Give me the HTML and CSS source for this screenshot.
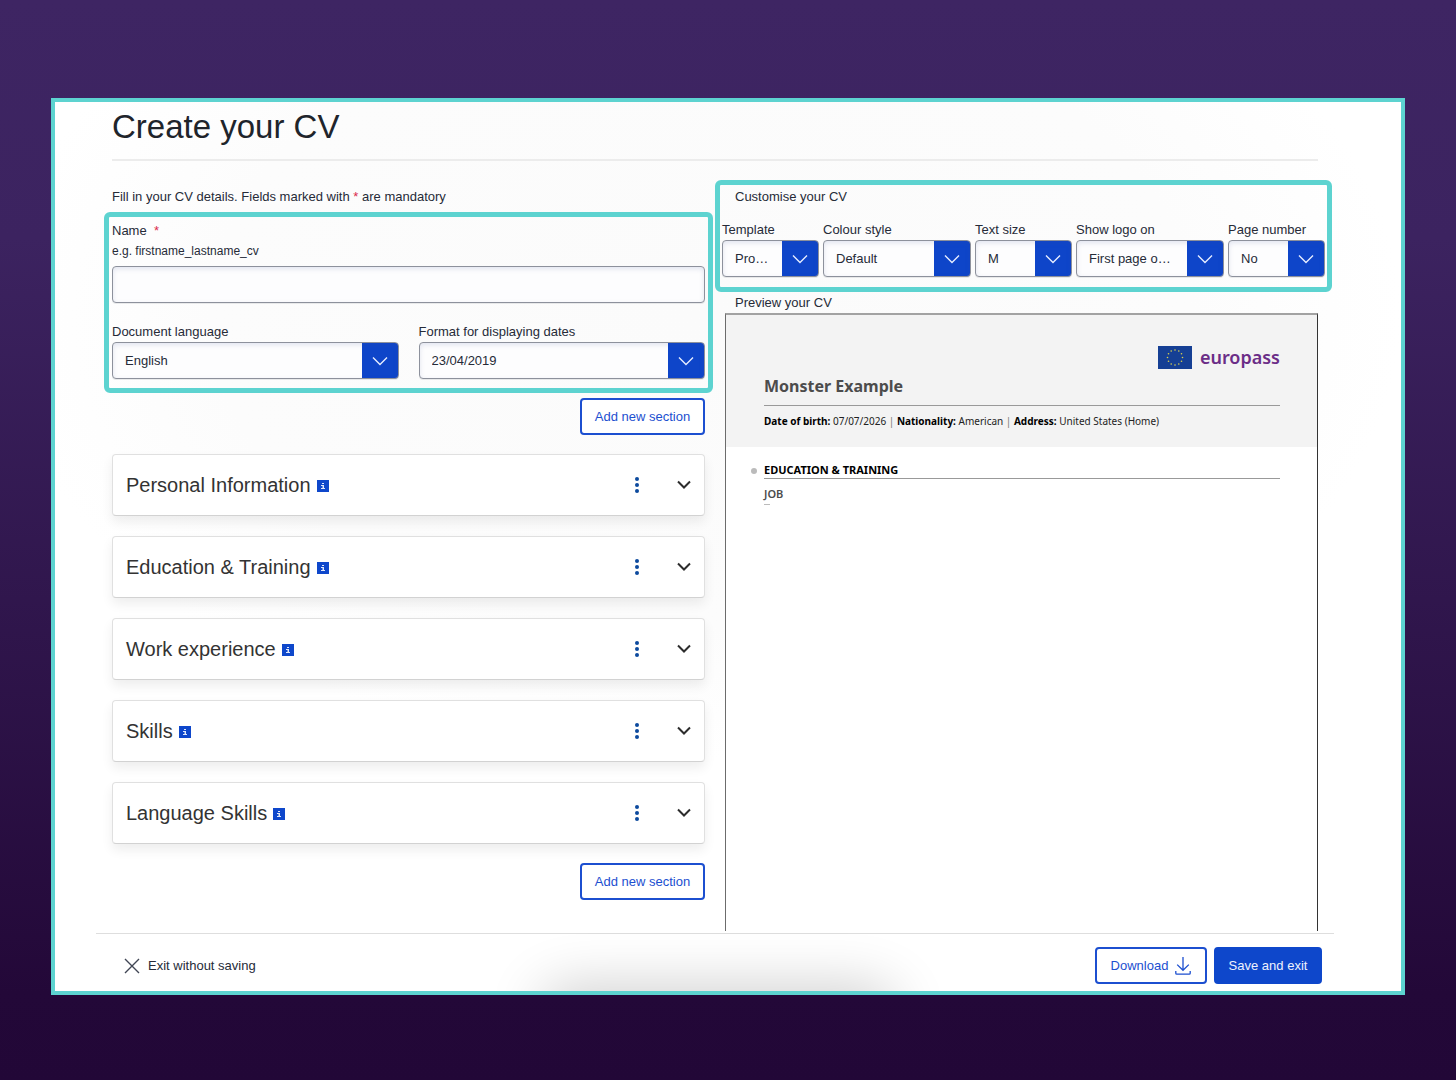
FILE: index.html
```html
<!DOCTYPE html>
<html lang="en">
<head>
<meta charset="utf-8">
<meta name="viewport" content="width=device-width, initial-scale=1">
<title>Create your CV</title>
<link rel="stylesheet" href="styles.css">
</head>
<body>
<svg class="sprite" aria-hidden="true">
  <symbol id="kebab" viewBox="0 0 6 18"><circle cx="3" cy="3" r="2"/><circle cx="3" cy="9" r="2"/><circle cx="3" cy="15" r="2"/></symbol>
  <symbol id="chevron" viewBox="0 0 14 10"><path d="M1 1.5 7 7.5 13 1.5" fill="none" stroke="currentColor" stroke-width="2"/></symbol>
  <symbol id="info" viewBox="0 0 12 12"><rect width="12" height="12" fill="#0e47cb"/><path d="M5 3h2v1H5zM4 5h3v3h1v1H4V8h1.500V6H4z" fill="#dfe7fa"/></symbol>
</svg>
<div class="frame">
  <header class="page-head"><h1>Create your CV</h1></header>
  <main class="columns">
    <form class="editor">
      <p class="intro">Fill in your CV details. Fields marked with <span class="req">*</span> are mandatory</p>
      <div class="highlight details">
        <label for="cv-name">Name &nbsp;<span class="req">*</span></label>
        <p class="hint" id="name-hint">e.g. firstname_lastname_cv</p>
        <input class="text-input" id="cv-name" type="text" aria-describedby="name-hint">
        <div class="pair">
          <div class="field"><label for="lang">Document language</label><select id="lang"><option>English</option></select></div>
          <div class="field"><label for="dates">Format for displaying dates</label><select id="dates"><option>23/04/2019</option></select></div>
        </div>
      </div>
      <button class="btn add" type="button">Add new section</button>
      <div class="cards">
        <section class="card"><h2>Personal Information</h2><button class="icon info" type="button" aria-label="Info"><svg><use href="#info"/></svg></button><button class="icon kebab" type="button" aria-label="Options"><svg><use href="#kebab"/></svg></button><button class="icon chevron" type="button" aria-label="Expand"><svg><use href="#chevron"/></svg></button></section>
        <section class="card"><h2>Education &amp; Training</h2><button class="icon info" type="button" aria-label="Info"><svg><use href="#info"/></svg></button><button class="icon kebab" type="button" aria-label="Options"><svg><use href="#kebab"/></svg></button><button class="icon chevron" type="button" aria-label="Expand"><svg><use href="#chevron"/></svg></button></section>
        <section class="card"><h2>Work experience</h2><button class="icon info" type="button" aria-label="Info"><svg><use href="#info"/></svg></button><button class="icon kebab" type="button" aria-label="Options"><svg><use href="#kebab"/></svg></button><button class="icon chevron" type="button" aria-label="Expand"><svg><use href="#chevron"/></svg></button></section>
        <section class="card"><h2>Skills</h2><button class="icon info" type="button" aria-label="Info"><svg><use href="#info"/></svg></button><button class="icon kebab" type="button" aria-label="Options"><svg><use href="#kebab"/></svg></button><button class="icon chevron" type="button" aria-label="Expand"><svg><use href="#chevron"/></svg></button></section>
        <section class="card"><h2>Language Skills</h2><button class="icon info" type="button" aria-label="Info"><svg><use href="#info"/></svg></button><button class="icon kebab" type="button" aria-label="Options"><svg><use href="#kebab"/></svg></button><button class="icon chevron" type="button" aria-label="Expand"><svg><use href="#chevron"/></svg></button></section>
      </div>
      <button class="btn add" type="button">Add new section</button>
    </form>
    <div class="result">
      <form class="highlight customise">
        <p class="caption">Customise your CV</p>
        <div class="options">
          <div class="field"><label for="template">Template</label><select id="template"><option>Pro…</option></select></div>
          <div class="field"><label for="colour">Colour style</label><select id="colour"><option>Default</option></select></div>
          <div class="field"><label for="size">Text size</label><select id="size"><option>M</option></select></div>
          <div class="field"><label for="logo">Show logo on</label><select id="logo"><option>First page o…</option></select></div>
          <div class="field"><label for="number">Page number</label><select id="number"><option>No</option></select></div>
        </div>
      </form>
      <p class="caption">Preview your CV</p>
      <article class="preview">
        <header class="cv-head">
          <div class="brand">
            <svg class="flag" viewBox="0 0 34 23" aria-hidden="true"><rect width="34" height="23" fill="#153f94"/>
              <g fill="#d9d04e"><circle cx="17" cy="4" r=".8"/><circle cx="20.8" cy="5" r=".8"/><circle cx="23.5" cy="7.7" r=".8"/><circle cx="24.5" cy="11.5" r=".8"/><circle cx="23.5" cy="15.3" r=".8"/><circle cx="20.8" cy="18" r=".8"/><circle cx="17" cy="19" r=".8"/><circle cx="13.2" cy="18" r=".8"/><circle cx="10.5" cy="15.3" r=".8"/><circle cx="9.5" cy="11.5" r=".8"/><circle cx="10.5" cy="7.7" r=".8"/><circle cx="13.2" cy="5" r=".8"/></g></svg>
            <span>europass</span>
          </div>
          <h2>Monster Example</h2>
          <p><b>Date of birth:</b> 07/07/2026 <i>|</i> <b>Nationality:</b> American <i>|</i> <b>Address:</b> United States (Home)</p>
        </header>
        <section class="cv-section">
          <h3>EDUCATION &amp; TRAINING</h3>
          <h4>JOB</h4>
        </section>
      </article>
    </div>
  </main>
  <footer class="actions">
    <button class="exit" type="button"><svg viewBox="0 0 16 16" aria-hidden="true"><path d="M1 1 15 15M15 1 1 15" fill="none" stroke="#404654" stroke-width="1.4"/></svg>Exit without saving</button>
    <button class="btn download" type="button">Download<svg viewBox="0 0 16 18" aria-hidden="true"><path d="M8 0V13M2.200 7.600 8 13.300 13.800 7.600M.8 14v2.200q0 1 1 1H14.200q1 0 1-1V14" fill="none" stroke="currentColor" stroke-width="1.300"/></svg></button>
    <button class="btn save" type="button">Save and exit</button>
  </footer>
</div>
</body>
</html>
```
FILE: styles.css
```css
* { box-sizing: border-box; }
body {
  margin: 0;
  min-height: 100vh;
  padding: 98px 51px 85px;
  background: linear-gradient(#3e2563 0%, #3c2360 22%, #230838 92%, #220737 100%);
  font: 13px/20px "Liberation Sans", Arial, sans-serif;
  color: #262b38;
}
h1, h2, h3, h4, p { margin: 0; font-weight: 400; }
button, input, select { font: inherit; color: inherit; margin: 0; }
button { cursor: pointer; }
.sprite { display: none; }

.frame {
  position: relative;
  overflow: hidden;
  border: 4px solid #5dd3d0;
  background: radial-gradient(ellipse 52% 50% at 48% 24%, #fbfbfb 0%, #fcfcfc 70%, #fff 100%) #fff;
}
/* soft shade rising from the lower edge */
.frame::after {
  content: "";
  position: absolute;
  left: 50%;
  top: 100%;
  width: 340px;
  height: 40px;
  margin-left: -180px;
  border-radius: 20px;
  box-shadow: 0 4px 56px 8px rgba(0, 0, 0, .2);
  pointer-events: none;
}

.page-head { margin: 0 83px 0 57px; padding-bottom: 7px; border-bottom: 2px solid #ececec; }
h1 { font-size: 33px; line-height: 50px; color: #20242b; }

.columns {
  display: grid;
  grid-template-columns: 609fr 617fr;
  gap: 2px;
  margin: 19px 69px 2px 49px;
}
.editor { display: flex; flex-direction: column; padding-bottom: 31px; }
.intro { padding: 7px 8px 5px; }
.req { color: #da2a4c; }
.highlight { border: 5px solid #5dd3d0; border-radius: 6px; }
.details { padding: 4px 3px 9px; }
.details label, .field label { display: block; }
.hint { font-size: 12px; line-height: 20px; }

.text-input, select {
  display: block;
  width: 100%;
  height: 37px;
  border: 1px solid #8d919c;
  border-radius: 4px;
  background-color: #fdfdfe;
  box-shadow: inset 0 2px 5px rgba(60, 80, 150, .14), 0 1px 0 rgba(60, 65, 80, .1);
}
.text-input { margin-top: 5px; padding: 0 12px; }
select {
  appearance: none;
  padding: 0 40px 0 12px;
  text-overflow: ellipsis;
  background-image:
    url("data:image/svg+xml,%3Csvg xmlns='http://www.w3.org/2000/svg' width='36' height='37'%3E%3Crect width='36' height='37' fill='%230e45c9'/%3E%3Cpath d='M11 15.500 18 22.500 25 15.500' fill='none' stroke='%23e6edff' stroke-width='1.400'/%3E%3C/svg%3E");
  background-repeat: no-repeat;
  background-position: right center;
}
.pair { display: grid; grid-template-columns: 1fr 1fr; gap: 20px; margin-top: 19px; }
.field { min-width: 0; }

.btn {
  height: 37px;
  padding: 0;
  border: 2px solid #1c4fd0;
  border-radius: 4px;
  background: #fff;
  color: #1c4fd0;
}
.add { width: 125px; align-self: flex-end; margin: 5px 8px 0 0; }

.cards { display: grid; gap: 20px; margin: 19px 8px 14px; }
.card {
  display: flex;
  align-items: center;
  height: 62px;
  padding: 0 13px;
  border: 1px solid #e0e0e0;
  border-bottom-color: #d2d2d2;
  border-radius: 4px;
  background: #fff;
  box-shadow: 0 6px 12px rgba(0, 0, 0, .07);
}
.card h2 { font-size: 20px; line-height: 28px; color: #333; }
.icon { display: flex; padding: 0; border: 0; background: none; }
.info { margin: 2px auto 0 6px; }
.info svg { width: 12px; height: 12px; }
.kebab { margin-right: 37px; }
.kebab svg { width: 6px; height: 18px; fill: #0c4a9e; }
.chevron svg { width: 14px; height: 10px; color: #2c2c2c; }

.result { display: flex; flex-direction: column; }
.customise { padding: 0 2px 10px; margin-bottom: 1px; }
.caption { padding-left: 20px; }
.customise .caption { padding: 2px 13px 13px; }
.options { display: grid; grid-template-columns: 97fr 148fr 97fr 148fr 97fr; gap: 4px; }

.preview {
  flex: 1;
  margin: 0 14px 0 10px;
  border: solid #6c6c6c;
  border-width: 2px 1px 0 1px;
  border-top-color: #a2a2a2;
  border-right-color: #333;
  background: #fff;
  font-family: "Noto Sans", "Open Sans", sans-serif;
  color: #222;
}
.cv-head { padding: 31px 37px 18px 38px; background: #f3f3f3; }
.brand { display: flex; justify-content: flex-end; gap: 8px; font-size: 18px; line-height: 23px; font-weight: 600; color: #6b2d87; }
.flag { width: 34px; height: 23px; }
.cv-head h2 { margin-top: 5px; padding-bottom: 7px; border-bottom: 1px solid #999; font-size: 16px; line-height: 24px; font-weight: 700; color: #4c4c4c; }
.cv-head p { margin-top: 7px; font-size: 10px; line-height: 16px; }
.cv-head b { color: #000; }
.cv-head i { font-style: normal; color: #777; }
.cv-section { padding: 15px 37px 0 38px; }
.cv-section h3 { position: relative; border-bottom: 1px solid #999; font-size: 11px; line-height: 16px; font-weight: 700; color: #000; }
.cv-section h3::before { content: ""; position: absolute; left: -13px; top: 6px; width: 6px; height: 6px; border-radius: 50%; background: #bbb; }
.cv-section h4 { margin-top: 7px; font-size: 11px; line-height: 16px; font-weight: 600; color: #4c4c4c; }
.cv-section h4::after { content: ""; display: block; width: 6px; height: 1px; margin-top: 2px; background: #bbb; }

.actions {
  display: flex;
  align-items: center;
  gap: 7px;
  margin: 0 67px 0 41px;
  padding: 13px 12px 7px 28px;
  border-top: 1px solid #dedede;
}
.exit { display: flex; align-items: center; gap: 8px; margin-right: auto; padding: 0; border: 0; background: none; }
.exit svg { width: 16px; height: 16px; }
.download { display: flex; align-items: center; justify-content: center; gap: 7px; width: 112px; }
.download svg { width: 16px; height: 18px; }
.save { width: 108px; background: #0e47cb; border-color: #0e47cb; color: #eef2fd; }
```
